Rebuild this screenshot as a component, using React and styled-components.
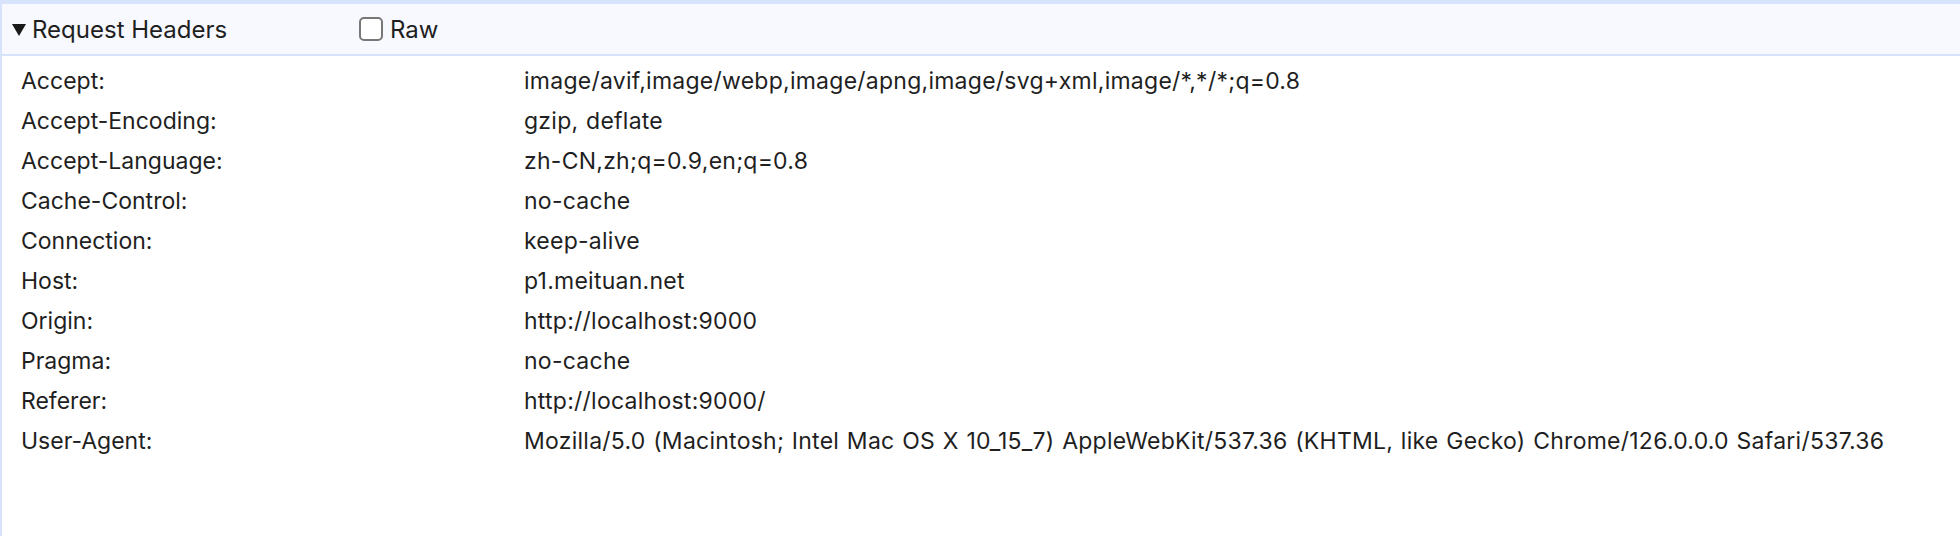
import React from 'react';
import styled, { createGlobalStyle } from 'styled-components';

const GlobalStyle = createGlobalStyle`
	html, body {
		margin: 0;
		padding: 0;
		background: #ffffff;
	}
	body {
		font-family: Inter, 'Noto Sans', 'Liberation Sans', sans-serif;
		color: #1f1f1f;
	}
`;

const headers = [
	['Accept:', 'image/avif,image/webp,image/apng,image/svg+xml,image/*,*/*;q=0.8'],
	['Accept-Encoding:', 'gzip, deflate'],
	['Accept-Language:', 'zh-CN,zh;q=0.9,en;q=0.8'],
	['Cache-Control:', 'no-cache'],
	['Connection:', 'keep-alive'],
	['Host:', 'p1.meituan.net'],
	['Origin:', 'http://localhost:9000'],
	['Pragma:', 'no-cache'],
	['Referer:', 'http://localhost:9000/'],
	[
		'User-Agent:',
		'Mozilla/5.0 (Macintosh; Intel Mac OS X 10_15_7) AppleWebKit/537.36 (KHTML, like Gecko) Chrome/126.0.0.0 Safari/537.36'
	]
];

const Panel = styled.div`
	height: 536px;
	box-sizing: border-box;
	border-top: 4px solid #d6e3fa;
	border-left: 2px solid #d6e3fa;
`;

const SectionHeader = styled.div`
	display: flex;
	align-items: center;
	height: 50px;
	background: #f7f9fe;
	border-bottom: 2px solid #d6e3fa;
	padding-left: 10px;
	font-size: 24px;
`;

const Title = styled.div`
	display: flex;
	align-items: center;
	width: 347px;
`;

const Triangle = styled.span`
	width: 0;
	height: 0;
	border-left: 7px solid transparent;
	border-right: 7px solid transparent;
	border-top: 12px solid #1a1a1a;
	margin-right: 6px;
	margin-top: 1px;
`;

const RawLabel = styled.label`
	display: flex;
	align-items: center;
	gap: 7px;
`;

const Checkbox = styled.span`
	width: 20px;
	height: 20px;
	border: 2px solid #777777;
	border-radius: 5px;
	background: #ffffff;
`;

const Rows = styled.div`
	padding: 5px 0 0 19px;
`;

const Row = styled.div`
	display: grid;
	grid-template-columns: 503px 1fr;
	height: 40px;
	align-items: center;
	font-size: 23px;
	white-space: nowrap;
`;

const Value = styled.span`
	letter-spacing: 0.25px;
	word-spacing: 1px;
`;

export default function App() {
	return (
		<>
			<GlobalStyle />
			<Panel>
				<SectionHeader>
					<Title>
						<Triangle />
						Request Headers
					</Title>
					<RawLabel>
						<Checkbox />
						Raw
					</RawLabel>
				</SectionHeader>
				<Rows>
					{headers.map(([name, value]) => (
						<Row key={name}>
							<span>{name}</span>
							<Value>{value}</Value>
						</Row>
					))}
				</Rows>
			</Panel>
		</>
	);
}
